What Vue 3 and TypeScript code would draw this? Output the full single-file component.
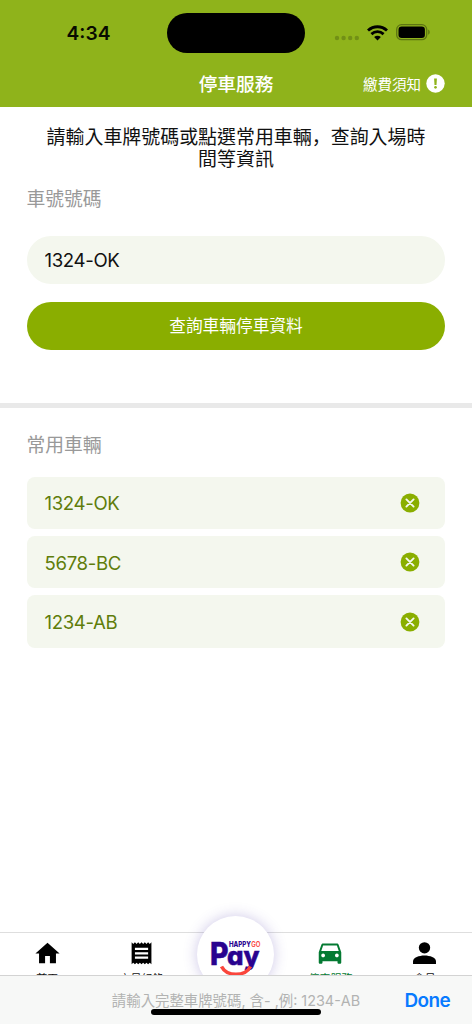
<script setup lang="ts">
import { ref } from 'vue'

const plate = ref('1324-OK')
const vehicles = ref<string[]>(['1324-OK', '5678-BC', '1234-AB'])

function removeVehicle(index: number) {
  vehicles.value.splice(index, 1)
}
</script>

<template>
  <div class="screen">
    <header class="header">
      <div class="status">
        <span class="clock">4:34</span>
        <div class="island"></div>
        <div class="indicators">
          <svg class="dots" width="26" height="6" viewBox="0 0 26 6">
            <circle cx="3" cy="3" r="2.2" /><circle cx="9.6" cy="3" r="2.2" />
            <circle cx="16.2" cy="3" r="2.2" /><circle cx="22.8" cy="3" r="2.2" />
          </svg>
          <svg class="wifi" width="21" height="16" viewBox="0 0 21 16">
            <path d="M1 5.5C6.5.5 14.5.5 20 5.5" stroke-width="2.9" />
            <path d="M4.4 9.1c3.6-3.2 8.6-3.2 12.2 0" stroke-width="2.8" />
            <path class="solid" d="M7.1 12.1c2-1.7 4.8-1.7 6.8 0L10.5 15.6z" />
          </svg>
          <svg class="battery" width="35" height="17" viewBox="0 0 35 17">
            <rect x=".7" y=".7" width="30" height="15" rx="4.8" class="shell" />
            <rect x="2.5" y="2.5" width="26.4" height="11.4" rx="3.2" />
            <path d="M32.2 5.6c2 .8 2 4.4 0 5.2z" class="cap" />
          </svg>
        </div>
      </div>
      <div class="titlebar">
        <span></span>
        <h1>停車服務</h1>
        <button class="notice">
          <span>繳費須知</span>
          <svg width="19" height="19" viewBox="0 0 19 19">
            <circle cx="9.5" cy="9.5" r="9.2" fill="#fff" />
            <path d="M8.1 4.5h2.8l-.4 6.4H8.5z" fill="#8fb31b" />
            <circle cx="9.5" cy="13.3" r="1.35" fill="#8fb31b" />
          </svg>
        </button>
      </div>
    </header>

    <main class="content">
      <section class="lookup">
        <p class="intro">請輸入車牌號碼或點選常用車輛<span class="comma" lang="zh-CN">，</span>查詢入場時<br />間等資訊</p>
        <h2 class="label">車號號碼</h2>
        <input v-model="plate" class="plate" type="text" />
        <button class="query">查詢車輛停車資料</button>
      </section>
      <div class="divider"></div>
      <section class="saved">
        <h2 class="label">常用車輛</h2>
        <ul>
          <li v-for="(item, index) in vehicles" :key="item">
            <span>{{ item }}</span>
            <button class="remove" @click="removeVehicle(index)">
              <svg width="20" height="20" viewBox="0 0 20 20">
                <circle cx="10" cy="10" r="9.4" fill="#8aae00" />
                <path d="M6.4 6.4l7.2 7.2M13.6 6.4l-7.2 7.2" stroke="#f5f8ef" stroke-width="1.9" stroke-linecap="round" />
              </svg>
            </button>
          </li>
        </ul>
      </section>
    </main>

    <nav class="tabs">
      <a class="tab">
        <svg width="29" height="29" viewBox="0 0 24 24"><path d="M10 20v-6h4v6h5v-8h3L12 3 2 12h3v8z" /></svg>
        <span>首頁</span>
      </a>
      <a class="tab">
        <svg width="29" height="29" viewBox="0 0 24 24"><path d="M18 17H6v-2h12v2zm0-4H6v-2h12v2zm0-4H6V7h12v2zM3 22l1.5-1.5L6 22l1.5-1.5L9 22l1.5-1.5L12 22l1.5-1.5L15 22l1.5-1.5L18 22l1.5-1.5L21 22V2l-1.5 1.5L18 2l-1.5 1.5L15 2l-1.5 1.5L12 2l-1.5 1.5L9 2 7.5 3.5 6 2 4.5 3.5 3 2v20z" transform="translate(1.1 .9) scale(.91)" /></svg>
        <span>交易紀錄</span>
      </a>
      <a class="tab pay">
        <svg width="77" height="77" viewBox="0 0 77 77">
          <text x="32" y="30.6" class="brand" textLength="22" lengthAdjust="spacingAndGlyphs">HAPPY</text>
          <text x="54.3" y="30.6" class="brand go" textLength="9.2" lengthAdjust="spacingAndGlyphs">GO</text>
          <text x="13" y="49" class="wordmark tall" textLength="18.5" lengthAdjust="spacingAndGlyphs">P</text>
          <text x="30" y="49" class="wordmark" textLength="32.5" lengthAdjust="spacingAndGlyphs">ay</text>
          <path d="M24.5 50.5c5.5 10.5 23.5 10.5 29 0" fill="none" stroke="#fa463c" stroke-width="3.6" />
        </svg>
      </a>
      <a class="tab active">
        <svg width="30" height="29" viewBox="0 0 24 24" preserveAspectRatio="none"><path d="M18.92 5.01C18.72 4.42 18.16 4 17.5 4h-11c-.66 0-1.21.42-1.42 1.01L3 11v8c0 .55.45 1 1 1h1c.55 0 1-.45 1-1v-1h12v1c0 .55.45 1 1 1h1c.55 0 1-.45 1-1v-8l-2.08-5.99zM6.5 15c-.83 0-1.5-.67-1.5-1.5S5.67 12 6.5 12s1.5.67 1.5 1.5S7.33 15 6.5 15zm11 0c-.83 0-1.5-.67-1.5-1.5s.67-1.5 1.5-1.5 1.5.67 1.5 1.5-.67 1.5-1.5 1.5zM5 10l1.5-4.5h11L19 10H5z" transform="translate(0 -.4) scale(1 1.04)" /></svg>
        <span>停車服務</span>
      </a>
      <a class="tab">
        <svg width="29" height="29" viewBox="0 0 24 24"><circle cx="12" cy="7.3" r="4.7" /><path d="M2.5 20.7v-2.2c0-3.1 5-4.8 9.5-4.8s9.5 1.7 9.5 4.8v2.2z" /></svg>
        <span>會員</span>
      </a>
    </nav>

    <footer class="accessory">
      <span></span>
      <span class="hint">請輸入完整車牌號碼, 含- ,例: 1234-AB</span>
      <button class="done">Done</button>
      <div class="home-indicator"></div>
    </footer>
  </div>
</template>

<style>
html,
body {
  margin: 0;
  background: #fff;
}
</style>

<style scoped>
.screen {
  display: flex;
  flex-direction: column;
  width: 472px;
  height: 1024px;
  overflow: hidden;
  background: #fff;
  color: #111;
  font-family: Inter, "Noto Sans CJK TC", sans-serif;
}
button {
  border: 0;
  padding: 0;
  background: none;
  font-family: inherit;
}
h1,
h2,
p,
ul {
  margin: 0;
  padding: 0;
}
svg {
  display: block;
  flex: none;
}
.header {
  height: 107.3px;
  flex: none;
  background: #8fb31b;
}
.status {
  display: grid;
  grid-template-columns: 167px 138px 1fr;
  align-items: center;
  height: 65px;
}
.clock {
  padding-left: 10px;
  text-align: center;
  font-size: 19.2px;
  font-weight: 600;
  color: #080b00;
}
.island {
  height: 40.5px;
  margin-top: 1px;
  border-radius: 21px;
  background: #000;
}
.indicators {
  display: flex;
  align-items: center;
  padding-left: 29px;
}
.dots {
  margin-top: 11px;
  fill: #729016;
}
.wifi {
  margin-left: 7px;
  fill: none;
  stroke: #000;
}
.wifi .solid {
  fill: #000;
  stroke: none;
}
.battery {
  margin-left: 8px;
}
.shell {
  fill: none;
  stroke: #5d7512;
  stroke-width: 1.3;
}
.cap {
  fill: #5d7512;
}
.titlebar {
  display: grid;
  grid-template-columns: 1fr auto 1fr;
  align-items: center;
  height: 38px;
  padding: 0 27px;
  color: #fff;
}
h1 {
  padding-top: 1px;
  font-size: 18.7px;
  font-weight: 500;
  line-height: 37px;
}
.notice {
  display: flex;
  align-items: center;
  justify-content: flex-end;
  gap: 5px;
  margin-top: -1px;
  color: #fff;
  font-size: 14.5px;
}
.notice span {
  margin-top: -1px;
}
.content {
  flex: 1;
  min-height: 0;
}
.lookup {
  display: flex;
  flex-direction: column;
  height: 296px;
  padding: 0 27px;
}
.intro {
  margin-top: 18px;
  text-align: center;
  font-size: 18.95px;
  line-height: 22px;
}
.comma {
  font-family: "Noto Sans CJK SC", sans-serif;
}
.label {
  margin-left: -0.5px;
  color: #999;
  font-size: 18.8px;
  font-weight: 400;
  line-height: 26px;
}
.lookup .label {
  margin-top: 15.5px;
}
.plate {
  box-sizing: border-box;
  width: 100%;
  height: 48px;
  margin-top: 23.2px;
  padding: 0 17.5px;
  border: 0;
  border-radius: 24px;
  outline: 0;
  background: #f4f7ee;
  color: #111;
  font: 18.6px Inter, sans-serif;
  letter-spacing: -0.35px;
}
.query {
  height: 48px;
  margin-top: 18px;
  padding-bottom: 1px;
  border-radius: 24px;
  background: #8aae00;
  color: #fff;
  font-size: 16.7px;
}
.divider {
  height: 4.5px;
  background: #e9e9e9;
}
.saved {
  padding: 25px 27px 0;
}
.saved ul {
  display: flex;
  flex-direction: column;
  gap: 7px;
  margin-top: 18px;
  list-style: none;
}
.saved li {
  display: flex;
  align-items: center;
  justify-content: space-between;
  height: 52.3px;
  padding: 0 25px 0 17.5px;
  border-radius: 8px;
  background: #f4f7ee;
  color: #5f7d0b;
  font-size: 18.6px;
  letter-spacing: -0.35px;
}
.saved li span {
  padding-top: 1px;
}
.tabs {
  display: grid;
  grid-template-columns: repeat(5, 1fr);
  flex: none;
  height: 42px;
  border-top: 1px solid #dedede;
}
.tab {
  display: flex;
  flex-direction: column;
  align-items: center;
  height: 42px;
  padding-top: 6px;
  box-sizing: border-box;
  fill: #000;
  font-size: 11px;
  line-height: 16px;
}
.tab span {
  margin-top: 3px;
}
.active {
  fill: #047a32;
  color: #047a32;
}
.pay {
  height: 77px;
  width: 77px;
  margin: -17px auto 0;
  padding: 0;
  border-radius: 50%;
  background: #fff;
  box-shadow: 0 0 14px rgba(76, 55, 170, 0.28);
}
.brand {
  fill: #29038f;
  font: 800 7.4px Inter, sans-serif;
}
.go {
  fill: #fa463c;
  font-weight: 600;
}
.wordmark {
  fill: #29038f;
  stroke: #29038f;
  stroke-width: 0.5;
  font: 800 25.5px Inter, sans-serif;
  font-feature-settings: "cv11";
}
.wordmark.tall {
  font-size: 31px;
}
.accessory {
  position: relative;
  display: grid;
  grid-template-columns: 1fr auto 1fr;
  align-items: center;
  flex: none;
  box-sizing: border-box;
  height: 49px;
  padding: 0 22px;
  border-top: 1px solid #d3d3d3;
  background: #f7f8f7;
}
.hint {
  padding-bottom: 1px;
  color: #b2b3b2;
  font-size: 14.4px;
  white-space: nowrap;
}
.done {
  justify-self: end;
  color: #087aff;
  font-size: 18.9px;
  font-weight: 600;
  letter-spacing: -0.6px;
}
.home-indicator {
  position: absolute;
  left: 151px;
  bottom: 9px;
  width: 170px;
  height: 6px;
  border-radius: 3px;
  background: #000;
}
</style>
